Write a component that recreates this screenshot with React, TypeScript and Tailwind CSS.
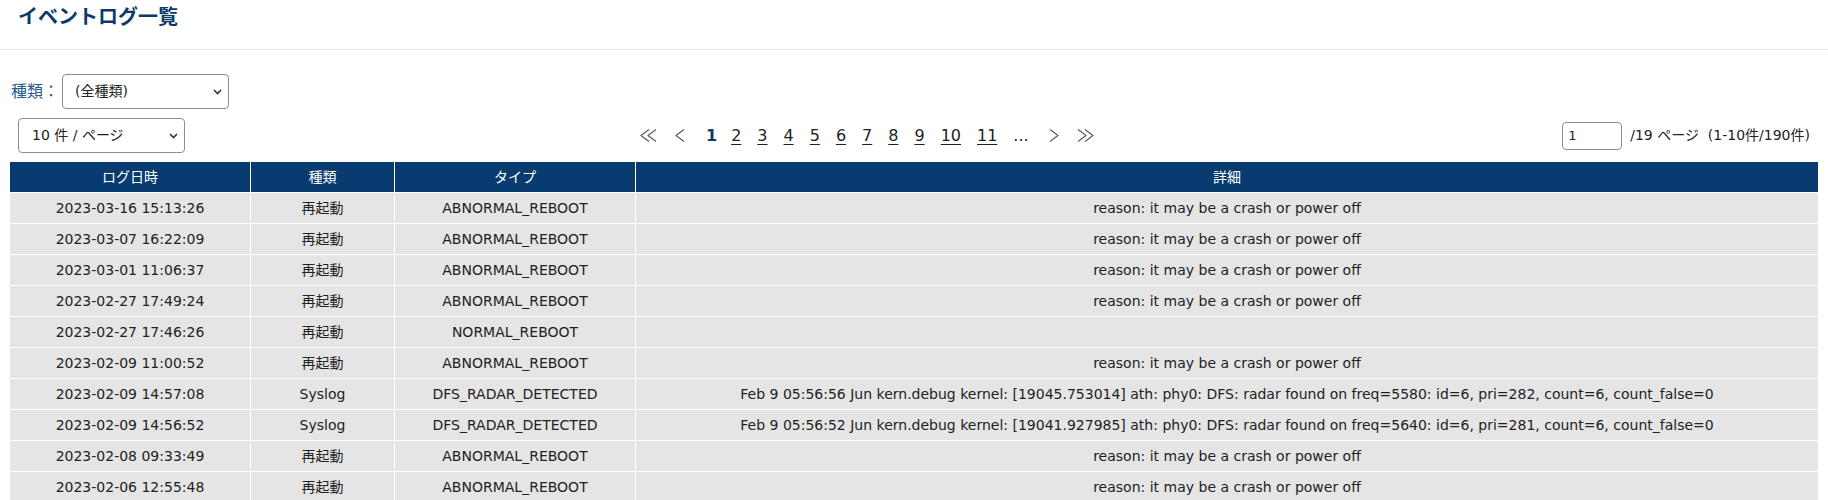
import { useState } from 'react'

const rows = [
  ['2023-03-16 15:13:26', '再起動', 'ABNORMAL_REBOOT', 'reason: it may be a crash or power off'],
  ['2023-03-07 16:22:09', '再起動', 'ABNORMAL_REBOOT', 'reason: it may be a crash or power off'],
  ['2023-03-01 11:06:37', '再起動', 'ABNORMAL_REBOOT', 'reason: it may be a crash or power off'],
  ['2023-02-27 17:49:24', '再起動', 'ABNORMAL_REBOOT', 'reason: it may be a crash or power off'],
  ['2023-02-27 17:46:26', '再起動', 'NORMAL_REBOOT', ''],
  ['2023-02-09 11:00:52', '再起動', 'ABNORMAL_REBOOT', 'reason: it may be a crash or power off'],
  [
    '2023-02-09 14:57:08',
    'Syslog',
    'DFS_RADAR_DETECTED',
    'Feb 9 05:56:56 Jun kern.debug kernel: [19045.753014] ath: phy0: DFS: radar found on freq=5580: id=6, pri=282, count=6, count_false=0',
  ],
  [
    '2023-02-09 14:56:52',
    'Syslog',
    'DFS_RADAR_DETECTED',
    'Feb 9 05:56:52 Jun kern.debug kernel: [19041.927985] ath: phy0: DFS: radar found on freq=5640: id=6, pri=281, count=6, count_false=0',
  ],
  ['2023-02-08 09:33:49', '再起動', 'ABNORMAL_REBOOT', 'reason: it may be a crash or power off'],
  ['2023-02-06 12:55:48', '再起動', 'ABNORMAL_REBOOT', 'reason: it may be a crash or power off'],
]

function Chevron() {
  return (
    <svg width="9" height="6" viewBox="0 0 9 6" className="pointer-events-none absolute right-[7px] top-1/2 -translate-y-1/2">
      <path d="M1 1 L4.5 4.5 L8 1" fill="none" stroke="#333" strokeWidth="1.6" />
    </svg>
  )
}

function Arrow({ dir, double }: { dir: 'l' | 'r'; double?: boolean }) {
  const w = double ? 17 : 10
  const one = dir === 'l' ? 'M9 0.5 L1 6.5 L9 12.5' : 'M1 0.5 L9 6.5 L1 12.5'
  const two = dir === 'l' ? 'M16 0.5 L8 6.5 L16 12.5' : 'M8 0.5 L16 6.5 L8 12.5'
  return (
    <svg width={w} height="14" viewBox={`0 0 ${w} 14`} className="block">
      <path d={one} fill="none" stroke="#555" strokeWidth="1.1" />
      {double && <path d={two} fill="none" stroke="#555" strokeWidth="1.1" />}
    </svg>
  )
}

export default function App() {
  const [kind, setKind] = useState('all')
  const [perPage, setPerPage] = useState('10')
  const [page, setPage] = useState('1')

  return (
    <div className="min-h-[500px] bg-white text-[#222] font-['DejaVu_Sans','Noto_Sans_CJK_JP',sans-serif]">
      {/* Title */}
      <div className="h-[50px] border-b border-[#e3e3e3] pl-[18px] pt-[3px]">
        <h1 className="text-[20px] leading-[28px] font-bold text-[#0c3a68]">イベントログ一覧</h1>
      </div>

      {/* Filter */}
      <div className="flex items-center pl-[11px] pt-[24px]">
        <label className="text-[16px] text-[#2a5b8c] mr-[3px]">種類：</label>
        <div className="relative">
          <select
            value={kind}
            onChange={(e) => setKind(e.target.value)}
            className="appearance-none block h-[35px] w-[167px] rounded-[4px] border border-[#8d8d8d] bg-white pl-[12px] text-[14px] text-[#222]"
          >
            <option value="all">(全種類)</option>
            <option value="reboot">再起動</option>
            <option value="syslog">Syslog</option>
          </select>
          <Chevron />
        </div>
      </div>

      {/* Paging bar */}
      <div className="flex items-center pl-[18px] pr-[18px] pt-[9px]">
        <div className="relative">
          <select
            value={perPage}
            onChange={(e) => setPerPage(e.target.value)}
            className="appearance-none block h-[35px] w-[167px] rounded-[4px] border border-[#8d8d8d] bg-white pl-[13px] text-[14px] text-[#222]"
          >
            <option value="10">10 件 / ページ</option>
            <option value="20">20 件 / ページ</option>
            <option value="50">50 件 / ページ</option>
          </select>
          <Chevron />
        </div>

        <div className="ml-[455px] flex items-center text-[16px] leading-[20px]">
          <Arrow dir="l" double />
          <span className="ml-[18px]"><Arrow dir="l" /></span>
          <span className="ml-[21px] font-bold text-[#0c3a68]">1</span>
          {['2', '3', '4', '5', '6', '7', '8', '9', '10', '11'].map((n, i) => (
            <a
              key={n}
              className={(i === 0 ? 'ml-[14px]' : 'ml-[16px]') + ' underline underline-offset-[3px] text-[#222] cursor-pointer'}
            >
              {n}
            </a>
          ))}
          <span className="ml-[16px]">...</span>
          <span className="ml-[20px]"><Arrow dir="r" /></span>
          <span className="ml-[18px]"><Arrow dir="r" double /></span>
        </div>

        <div className="ml-auto flex items-center text-[14px]">
          <input
            value={page}
            onChange={(e) => setPage(e.target.value)}
            className="h-[28px] w-[60px] rounded-[4px] border border-[#8d8d8d] px-[5px] text-[13px]"
          />
          <span className="ml-[8px]">/19 ページ&nbsp;&nbsp;(1-10件/190件)</span>
        </div>
      </div>

      {/* Table */}
      <div className="px-[9px] pt-[8px]">
        <table className="w-full border-collapse text-[14px] text-center">
          <thead>
            <tr className="h-[31px] bg-[#083c70] text-white">
              <th className="w-[241px] border border-white font-normal">ログ日時</th>
              <th className="w-[144px] border border-white font-normal">種類</th>
              <th className="w-[241px] border border-white font-normal">タイプ</th>
              <th className="border border-white font-normal">詳細</th>
            </tr>
          </thead>
          <tbody>
            {rows.map((r, i) => (
              <tr key={i} className="h-[31px] bg-[#e5e5e5]">
                <td className="border border-white">{r[0]}</td>
                <td className="border border-white">{r[1]}</td>
                <td className="border border-white">{r[2]}</td>
                <td className="border border-white">{r[3]}</td>
              </tr>
            ))}
          </tbody>
        </table>
      </div>
    </div>
  )
}
